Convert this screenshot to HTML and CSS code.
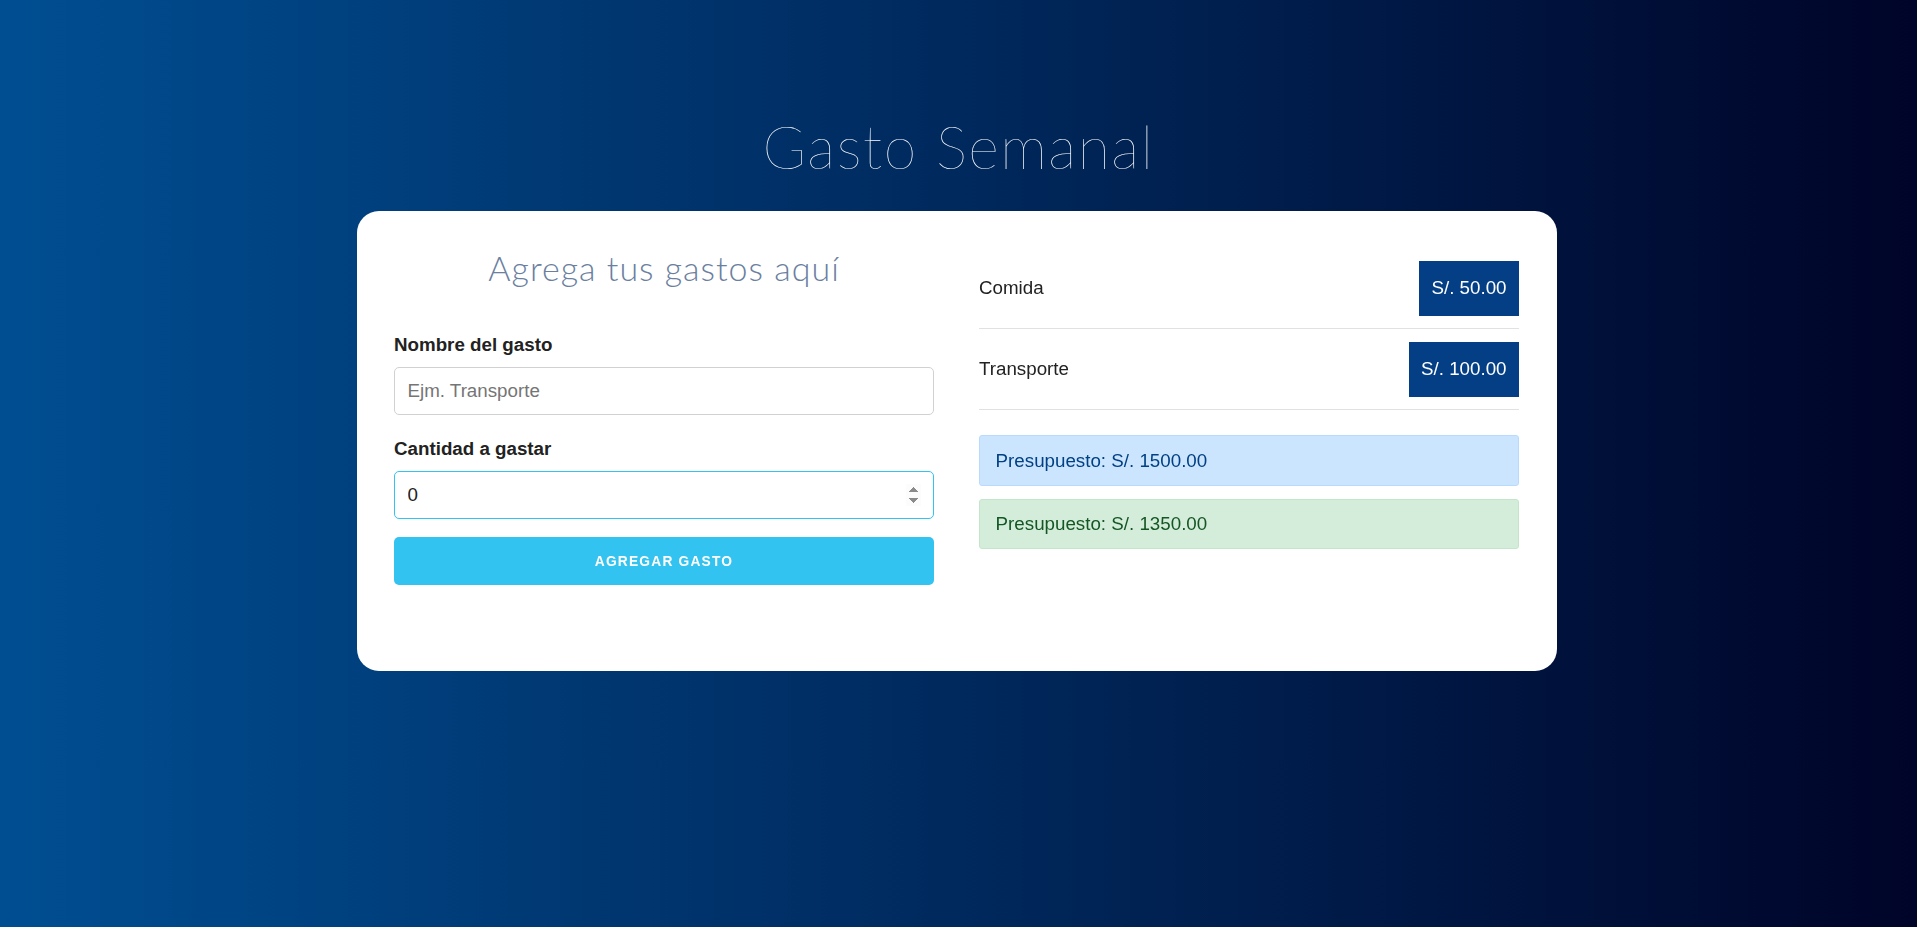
FILE: index.html
```html
<!DOCTYPE html>
<html lang="es">
<head>
<meta charset="utf-8">
<title>Gasto Semanal</title>
<link rel="stylesheet" href="styles.css">
</head>
<body>
  <header class="page-header">
    <h1 class="page-title">Gasto Semanal</h1>
  </header>
  <main class="card">
    <section class="col">
      <h2 class="form-title">Agrega tus gastos aquí</h2>
      <form class="form">
        <label class="label" for="nombre">Nombre del gasto</label>
        <input class="field" id="nombre" type="text" placeholder="Ejm. Transporte">
        <label class="label" for="cantidad">Cantidad a gastar</label>
        <input class="field field-focus" id="cantidad" type="number" value="0" autofocus>
        <button class="btn" type="button">Agregar gasto</button>
      </form>
    </section>
    <section class="col">
      <ul class="list">
        <li class="item"><span class="item-name">Comida</span><span class="badge">S/. 50.00</span></li>
        <li class="item"><span class="item-name">Transporte</span><span class="badge">S/. 100.00</span></li>
      </ul>
      <div class="alert alert-primary">Presupuesto: S/. 1500.00</div>
      <div class="alert alert-success">Presupuesto: S/. 1350.00</div>
    </section>
  </main>
</body>
</html>
```

FILE: styles.css
```css
* { box-sizing: border-box; }

html, body { margin: 0; padding: 0; }

body {
  min-height: 927px;
  background: linear-gradient(to right, #004e92, #000428);
  font-family: "Liberation Sans", Arial, sans-serif;
  font-size: 18.75px;
  line-height: 30px;
  color: #222;
  padding-top: 112px;
}

.page-header { text-align: center; }

.page-title {
  margin: 0 0 28px;
  font-family: Lato, sans-serif;
  font-weight: 100;
  font-size: 59px;
  line-height: 1.2;
  color: #fff;
  letter-spacing: 1.5px;
}

.card {
  width: 1200px;
  margin: 0 0 0 calc(50% - 602px);
  background: #fff;
  border-radius: 22px;
  padding: 37.5px 37.5px 86px;
  display: grid;
  grid-template-columns: 1fr 1fr;
  column-gap: 45px;
  align-items: start;
}

.form-title {
  margin: 0 0 40.7px;
  text-align: center;
  font-family: Lato, sans-serif;
  font-weight: 300;
  font-size: 34px;
  line-height: 1.2;
  color: #6b7f9f;
  letter-spacing: 1px;
}

.form { display: flex; flex-direction: column; }

.label {
  display: block;
  font-weight: 700;
  margin-bottom: 7.5px;
}

.field {
  height: 47.5px;
  width: 100%;
  padding: 7.5px 12.5px;
  border: 1px solid #d1d1d1;
  border-radius: 5px;
  font-family: "Liberation Sans", Arial, sans-serif;
  font-size: 18.75px;
  color: #222;
  background: #fff;
  margin: 0 0 18.75px;
  outline: none;
  box-shadow: none;
}

.field::placeholder { color: #757575; }

.field-focus { border-color: #33c3f0; }

.btn {
  height: 47.5px;
  width: 100%;
  border: none;
  border-radius: 5px;
  background: #33c3f0;
  color: #fff;
  font-family: "Liberation Sans", Arial, sans-serif;
  font-size: 13.75px;
  font-weight: 700;
  letter-spacing: 1.2px;
  text-transform: uppercase;
  cursor: pointer;
  padding: 0;
}

.list { list-style: none; margin: 0 0 25px; padding: 0; }

.item {
  display: flex;
  justify-content: space-between;
  align-items: center;
  padding: 12.5px 0;
  border-bottom: 1px solid #e1e1e1;
}

.badge {
  background: #043f86;
  color: #fff;
  padding: 12.5px;
  line-height: 30px;
}

.alert {
  padding: 9.4px 15.6px;
  border: 1px solid transparent;
  border-radius: 3px;
  margin-bottom: 12.5px;
}

.alert-primary { background: #cce5ff; border-color: #b8daff; color: #004085; }
.alert-success { background: #d4edda; border-color: #c3e6cb; color: #155724; }
```
